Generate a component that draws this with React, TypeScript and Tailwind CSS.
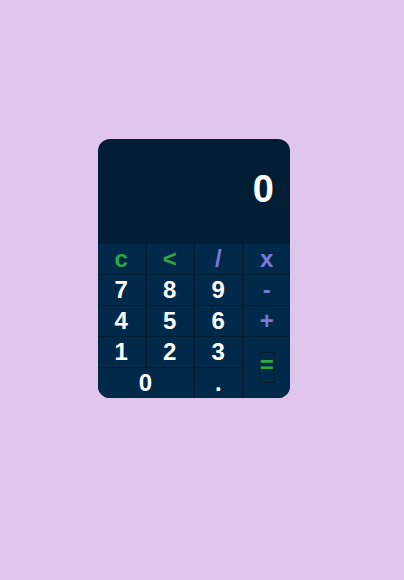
import React from 'react';

type Key = { label: string; tone?: 'green' | 'purple'; className?: string };

const keys: Key[] = [
  { label: 'c', tone: 'green' },
  { label: '<', tone: 'green' },
  { label: '/', tone: 'purple' },
  { label: 'x', tone: 'purple' },
  { label: '7' },
  { label: '8' },
  { label: '9' },
  { label: '-', tone: 'purple' },
  { label: '4' },
  { label: '5' },
  { label: '6' },
  { label: '+', tone: 'purple' },
  { label: '1' },
  { label: '2' },
  { label: '3' },
  { label: '=', tone: 'green', className: 'row-span-2' },
  { label: '0', className: 'col-span-2' },
  { label: '.' },
];

const toneClass = (tone?: Key['tone']) =>
  tone === 'green' ? 'text-[#2ea83f]' : tone === 'purple' ? 'text-[#7c7ad8]' : 'text-white';

export default function App() {
  return (
    <div
      className="min-h-[580px] w-full bg-[#e0c5ec] pl-[98px] pt-[139px]"
      style={{ fontFamily: '"Liberation Sans", Arial, sans-serif' }}
    >
      <div className="flex h-[259px] w-[192px] flex-col overflow-hidden rounded-xl bg-[#011e34]">
        <div className="flex h-[105px] items-center justify-end pb-[4px] pr-[16px] text-[38px] font-bold text-white">
          0
        </div>
        <div className="grid flex-1 grid-cols-4 grid-rows-5 gap-x-[2px] gap-y-px">
          {keys.map((k) => (
            <button
              key={k.label}
              className={`flex items-center justify-center bg-[#012a4a] text-[24px] font-bold leading-none ${toneClass(k.tone)} ${k.className ?? ''}`}
            >
              {k.label === '=' ? (
                <span className="flex h-[31px] w-[16px] items-center justify-center border border-[#011e34] pb-[6px]">=</span>
              ) : (
                k.label
              )}
            </button>
          ))}
        </div>
      </div>
    </div>
  );
}
